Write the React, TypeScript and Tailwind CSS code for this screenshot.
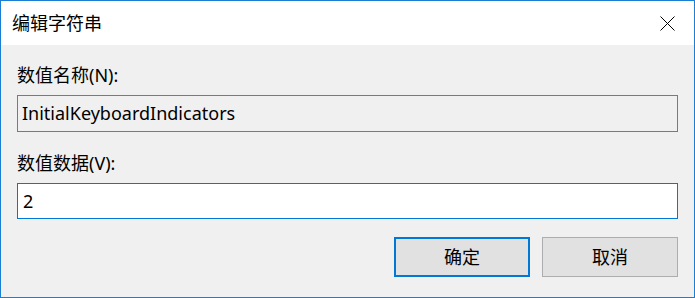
import React from 'react';

const font = { fontFamily: '"Noto Sans", "Noto Sans CJK SC", sans-serif' };

export default function App() {
  return (
    <div
      className="w-[695px] h-[298px] border border-[#1a7fd4] bg-[#f0f0f0] flex flex-col overflow-hidden text-[#000]"
      style={font}
    >
      {/* title bar */}
      <div className="h-[44px] bg-white flex items-center justify-between pl-[11px] pr-[17px] shrink-0">
        <span className="text-[18px] leading-none">编辑字符串</span>
        <svg width="15" height="15" viewBox="0 0 15 15" className="mr-[2px]">
          <path d="M0.5 0.5 L14.5 14.5 M14.5 0.5 L0.5 14.5" stroke="#000" strokeWidth="1" fill="none" />
        </svg>
      </div>

      {/* body */}
      <div className="flex-1 flex flex-col pl-[16px] pr-[16px]">
        <div className="mt-[19px] text-[18px] leading-[22px]">数值名称(N):</div>
        <div className="mt-[9px] h-[37px] border border-[#7a7a7a] bg-[#f0f0f0] flex items-center pl-[4px] text-[18px]">
          InitialKeyboardIndicators
        </div>
        <div className="mt-[20px] text-[18px] leading-[22px]">数值数据(V):</div>
        <div className="mt-[9px] h-[36px] border border-[#0078d7] bg-white flex items-center pl-[5px] text-[18px]">
          2
        </div>
        <div className="mt-[18px] flex justify-end gap-[12px]">
          <button className="w-[136px] h-[40px] border-2 border-[#0078d7] bg-[#e1e1e1] text-[18px]" style={font}>
            确定
          </button>
          <button className="w-[136px] h-[40px] border border-[#adadad] bg-[#e1e1e1] text-[18px]" style={font}>
            取消
          </button>
        </div>
      </div>
    </div>
  );
}
